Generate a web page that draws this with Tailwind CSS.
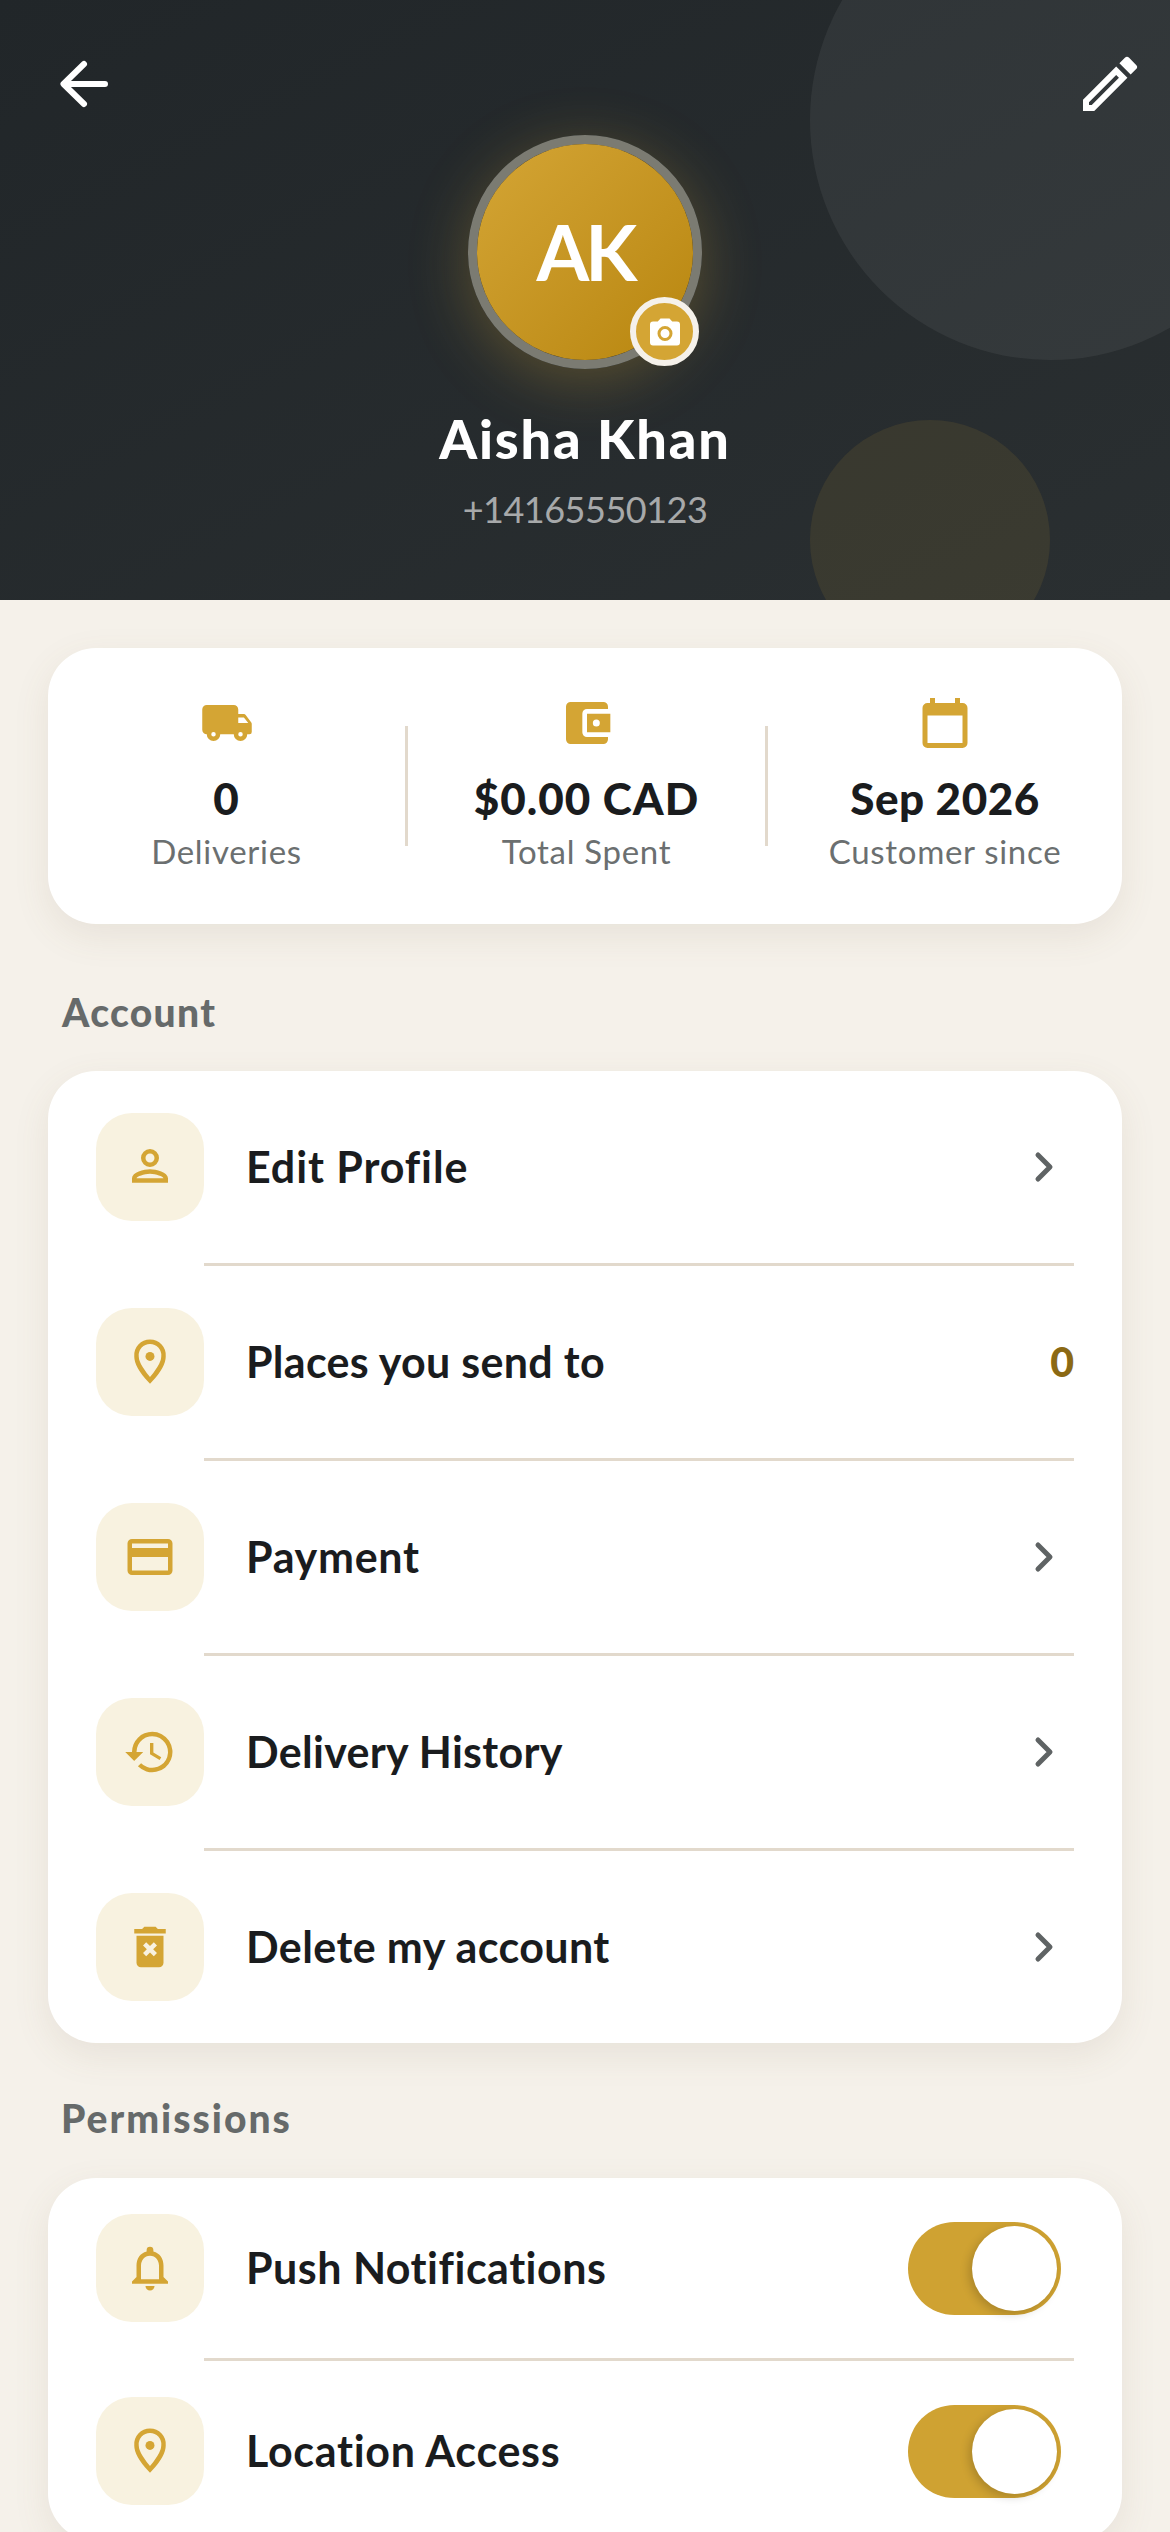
<!DOCTYPE html>
<html>
<head>
<meta charset="utf-8">
<script src="https://cdn.jsdelivr.net/npm/@tailwindcss/browser@4"></script>
</head>
<body class="m-0">
<div class="w-[1170px] h-[2532px] overflow-hidden bg-[#F5F1EA] font-['Lato','Noto_Sans',sans-serif] text-[#1A1C1E]">

  <header class="relative h-[600px] overflow-hidden bg-gradient-to-br from-[#212629] to-[#2A2F31] flex flex-col items-center pt-[135px]">
    <div class="absolute left-[810px] top-[-120px] w-[480px] h-[480px] rounded-full bg-white/6"></div>
    <div class="absolute left-[810px] top-[420px] w-[240px] h-[240px] rounded-full bg-[#D4A534]/10"></div>
    <svg class="absolute left-[58px] top-[58px]" width="52" height="52" viewBox="0 0 52 52" fill="none" stroke="#fff" stroke-width="6" stroke-linecap="round" stroke-linejoin="round"><path d="M47 26H6M26 6 5.500 26 26 46"/></svg>
    <svg class="absolute left-[1074px] top-[48px]" width="72" height="72" viewBox="0 0 24 24" fill="#fff"><path d="M3 17.250V21h3.750L17.810 9.940l-3.750-3.750L3 17.250zM5.920 19H5v-.920l9.060-9.060.920.920L5.920 19zM20.710 7.040a1 1 0 0 0 0-1.410l-2.340-2.340a1 1 0 0 0-1.410 0l-1.830 1.830 3.750 3.750 1.830-1.830z"/></svg>

    <div class="relative w-[234px] h-[234px] shrink-0 rounded-full border-[9px] border-[#7B7B72] shadow-[0_12px_60px_rgba(212,165,52,0.3)]">
      <div class="w-full h-full rounded-full bg-gradient-to-br from-[#D4A534] to-[#B8860B] flex items-center justify-center text-white text-[76px] tracking-[-4px] font-bold leading-none">AK</div>
      <div class="absolute left-[153px] top-[153px] w-[69px] h-[69px] rounded-full bg-[#D4A534] border-[6px] border-[#F5F1EA] flex items-center justify-center">
        <svg width="36" height="36" viewBox="0 0 24 24" fill="#fff"><path d="M9 3 7.170 5H4a2 2 0 0 0-2 2v12a2 2 0 0 0 2 2h16a2 2 0 0 0 2-2V7a2 2 0 0 0-2-2h-3.170L15 3H9zm3 15a5 5 0 1 1 0-10 5 5 0 0 1 0 10zm0-2a3 3 0 1 0 0-6 3 3 0 0 0 0 6z" fill-rule="evenodd"/></svg>
      </div>
    </div>
    <h1 class="mt-[37px] text-[54px] leading-[66px] font-black tracking-[1.8px] text-white">Aisha Khan</h1>
    <p class="mt-[13px] text-[36px] leading-[48px] tracking-[-0.5px] text-white/60">+14165550123</p>
  </header>

  <main class="px-[48px] pt-[48px]">
    <section class="h-[276px] rounded-[48px] bg-white shadow-[0_12px_36px_rgba(120,100,70,0.10)] grid grid-cols-[357px_3px_357px_3px_354px] items-center">
      <div class="flex flex-col items-center pb-[8px]">
        <div class="h-[60px] flex items-center">
          <svg width="54" height="54" viewBox="0 0 24 24" fill="#D4A534" fill-rule="evenodd"><path d="M15 4H3a2 2 0 0 0-2 2v9a2 2 0 0 0 2 2 3 3 0 0 0 6 0h6a3 3 0 0 0 6 0h1a1 1 0 0 0 1-1v-3.670a1 1 0 0 0-.200-.600l-2.500-3.330a1 1 0 0 0-.800-.400H17V6a2 2 0 0 0-2-2zM6 18a1 1 0 1 1 0-2 1 1 0 0 1 0 2zM19.500 9.500l1.960 2.500H17V9.500zM18 18a1 1 0 1 1 0-2 1 1 0 0 1 0 2z"/></svg>
        </div>
        <div class="mt-[20px] text-[44px] leading-[50px] font-black tracking-[1px]">0</div>
        <div class="mt-[8px] text-[33px] leading-[40px] tracking-[0.7px] text-[#6B6F70]">Deliveries</div>
      </div>
      <div class="h-[120px] bg-[#E2D9CC]"></div>
      <div class="flex flex-col items-center pb-[8px]">
        <div class="h-[60px] flex items-center">
          <svg width="56" height="56" viewBox="0 0 24 24" fill="#D4A534"><path d="M21 18v1a2 2 0 0 1-2 2H5a2 2 0 0 1-2-2V5a2 2 0 0 1 2-2h14a2 2 0 0 1 2 2v1h-9a2 2 0 0 0-2 2v8a2 2 0 0 0 2 2h9zm-9-2h10V8H12v8zm4-2.500a1.500 1.500 0 1 1 0-3 1.500 1.500 0 0 1 0 3z"/></svg>
        </div>
        <div class="mt-[20px] text-[44px] leading-[50px] font-black tracking-[1px]">$0.00 CAD</div>
        <div class="mt-[8px] text-[33px] leading-[40px] tracking-[0.7px] text-[#6B6F70]">Total Spent</div>
      </div>
      <div class="h-[120px] bg-[#E2D9CC]"></div>
      <div class="flex flex-col items-center pb-[8px]">
        <div class="h-[60px] flex items-center">
          <svg width="60" height="60" viewBox="0 0 24 24" fill="#D4A534"><path d="M19 4h-1V2h-2v2H8V2H6v2H5a2 2 0 0 0-2 2v14a2 2 0 0 0 2 2h14a2 2 0 0 0 2-2V6a2 2 0 0 0-2-2zm0 16H5V9h14v11z"/></svg>
        </div>
        <div class="mt-[20px] text-[44px] leading-[50px] font-black tracking-[0.5px]">Sep 2026</div>
        <div class="mt-[8px] text-[33px] leading-[40px] tracking-[0.7px] text-[#6B6F70]">Customer since</div>
      </div>
    </section>

    <h2 class="mt-[64px] ml-[14px] text-[39px] leading-[48px] font-black tracking-[1.3px] text-[#666A6A]">Account</h2>

    <section class="mt-[35px] rounded-[48px] bg-white shadow-[0_12px_36px_rgba(120,100,70,0.10)] px-[48px]">
      <div class="h-[192px] flex items-center">
        <div class="w-[108px] h-[108px] rounded-[36px] bg-[#F8F2E0] flex items-center justify-center">
          <svg width="54" height="54" viewBox="0 0 24 24" fill="#D4A534"><path d="M12 6a2 2 0 1 1 0 4 2 2 0 0 1 0-4m0 9c2.700 0 5.800 1.290 6 2H6c.230-.720 3.310-2 6-2M12 4a4 4 0 1 0 0 8 4 4 0 0 0 0-8zm0 9c-2.670 0-8 1.340-8 4v2h16v-2c0-2.660-5.330-4-8-4z"/></svg>
        </div>
        <span class="ml-[42px] flex-1 text-[43px] tracking-[0.9px] font-bold">Edit Profile</span>
        <svg class="mr-[15px]" width="30" height="36" viewBox="0 0 30 36" fill="none" stroke="#5F6364" stroke-width="5" stroke-linecap="round" stroke-linejoin="round"><path d="M9 6l12 12L9 30"/></svg>
      </div>
      <div class="ml-[108px] h-[3px] bg-[#E2D9CC]"></div>
      <div class="h-[192px] flex items-center">
        <div class="w-[108px] h-[108px] rounded-[36px] bg-[#F8F2E0] flex items-center justify-center">
          <svg width="54" height="54" viewBox="0 0 24 24" fill="none" stroke="#D4A534" stroke-width="2"><path d="M12 3a6 6 0 0 1 6 6.500c0 3-3 7.500-6 10.700-3-3.200-6-7.700-6-10.700A6 6 0 0 1 12 3z"/><circle cx="12" cy="9.500" r="2" fill="#D4A534" stroke="none"/></svg>
        </div>
        <span class="ml-[42px] flex-1 text-[43px] tracking-[0.3px] font-bold">Places you send to</span>
        <span class="text-[41px] font-black text-[#8B6914]">0</span>
      </div>
      <div class="ml-[108px] h-[3px] bg-[#E2D9CC]"></div>
      <div class="h-[192px] flex items-center">
        <div class="w-[108px] h-[108px] rounded-[36px] bg-[#F8F2E0] flex items-center justify-center">
          <svg width="54" height="54" viewBox="0 0 24 24" fill="#D4A534"><path d="M20 4H4a2 2 0 0 0-2 2v12a2 2 0 0 0 2 2h16a2 2 0 0 0 2-2V6a2 2 0 0 0-2-2zm0 14H4v-6h16v6zm0-10H4V6h16v2z"/></svg>
        </div>
        <span class="ml-[42px] flex-1 text-[43px] tracking-[0.7px] font-bold">Payment</span>
        <svg class="mr-[15px]" width="30" height="36" viewBox="0 0 30 36" fill="none" stroke="#5F6364" stroke-width="5" stroke-linecap="round" stroke-linejoin="round"><path d="M9 6l12 12L9 30"/></svg>
      </div>
      <div class="ml-[108px] h-[3px] bg-[#E2D9CC]"></div>
      <div class="h-[192px] flex items-center">
        <div class="w-[108px] h-[108px] rounded-[36px] bg-[#F8F2E0] flex items-center justify-center">
          <svg width="54" height="54" viewBox="0 0 24 24" fill="#D4A534"><path d="M13 3a9 9 0 0 0-9 9H1l3.890 3.890.070.140L9 12H6a7 7 0 1 1 2.050 4.950l-1.420 1.420A9 9 0 1 0 13 3zm-1 5v5l4.280 2.540.720-1.210-3.500-2.080V8H12z"/></svg>
        </div>
        <span class="ml-[42px] flex-1 text-[43px] tracking-[0.3px] font-bold">Delivery History</span>
        <svg class="mr-[15px]" width="30" height="36" viewBox="0 0 30 36" fill="none" stroke="#5F6364" stroke-width="5" stroke-linecap="round" stroke-linejoin="round"><path d="M9 6l12 12L9 30"/></svg>
      </div>
      <div class="ml-[108px] h-[3px] bg-[#E2D9CC]"></div>
      <div class="h-[192px] flex items-center">
        <div class="w-[108px] h-[108px] rounded-[36px] bg-[#F8F2E0] flex items-center justify-center">
          <svg width="54" height="54" viewBox="0 0 24 24" fill="#D4A534"><path d="M15.500 4l-1-1h-5l-1 1H5v2h14V4h-3.500zM6 19a2 2 0 0 0 2 2h8a2 2 0 0 0 2-2V7H6v12zm2.900-7.700 1.400-1.400L12 11.600l1.700-1.700 1.400 1.400-1.700 1.700 1.700 1.700-1.400 1.400-1.700-1.700-1.700 1.700-1.400-1.400 1.700-1.700-1.700-1.700z"/></svg>
        </div>
        <span class="ml-[42px] flex-1 text-[43px] tracking-[0.4px] font-bold">Delete my account</span>
        <svg class="mr-[15px]" width="30" height="36" viewBox="0 0 30 36" fill="none" stroke="#5F6364" stroke-width="5" stroke-linecap="round" stroke-linejoin="round"><path d="M9 6l12 12L9 30"/></svg>
      </div>
    </section>

    <h2 class="mt-[51px] ml-[13px] text-[39px] leading-[48px] font-black tracking-[2px] text-[#666A6A]">Permissions</h2>

    <section class="mt-[36px] rounded-[48px] bg-white shadow-[0_12px_36px_rgba(120,100,70,0.10)] px-[48px]">
      <div class="h-[180px] flex items-center">
        <div class="w-[108px] h-[108px] rounded-[36px] bg-[#F8F2E0] flex items-center justify-center">
          <svg width="54" height="54" viewBox="0 0 24 24" fill="#D4A534"><path d="M12 22a2 2 0 0 0 2-2h-4a2 2 0 0 0 2 2zm6-6v-5c0-3.070-1.640-5.640-4.500-6.320V4a1.500 1.500 0 0 0-3 0v.680C7.630 5.360 6 7.920 6 11v5l-2 2v1h16v-1l-2-2zm-2 1H8v-6c0-2.480 1.510-4.500 4-4.500s4 2.020 4 4.500v6z"/></svg>
        </div>
        <span class="ml-[42px] flex-1 text-[43px] tracking-[0.5px] font-bold">Push Notifications</span>
        <div class="mr-[13px] w-[153px] h-[93px] rounded-full bg-[#CFA232] flex items-center justify-end pr-[4px]">
          <div class="w-[85px] h-[85px] rounded-full bg-white shadow-[-3px_3px_10px_rgba(0,0,0,0.18)]"></div>
        </div>
      </div>
      <div class="ml-[108px] h-[3px] bg-[#E2D9CC]"></div>
      <div class="h-[180px] flex items-center">
        <div class="w-[108px] h-[108px] rounded-[36px] bg-[#F8F2E0] flex items-center justify-center">
          <svg width="54" height="54" viewBox="0 0 24 24" fill="none" stroke="#D4A534" stroke-width="2"><path d="M12 3a6 6 0 0 1 6 6.500c0 3-3 7.500-6 10.700-3-3.200-6-7.700-6-10.700A6 6 0 0 1 12 3z"/><circle cx="12" cy="9.500" r="2" fill="#D4A534" stroke="none"/></svg>
        </div>
        <span class="ml-[42px] flex-1 text-[43px] tracking-[0.7px] font-bold">Location Access</span>
        <div class="mr-[13px] w-[153px] h-[93px] rounded-full bg-[#CFA232] flex items-center justify-end pr-[4px]">
          <div class="w-[85px] h-[85px] rounded-full bg-white shadow-[-3px_3px_10px_rgba(0,0,0,0.18)]"></div>
        </div>
      </div>
    </section>
  </main>
</div>
</body>
</html>
